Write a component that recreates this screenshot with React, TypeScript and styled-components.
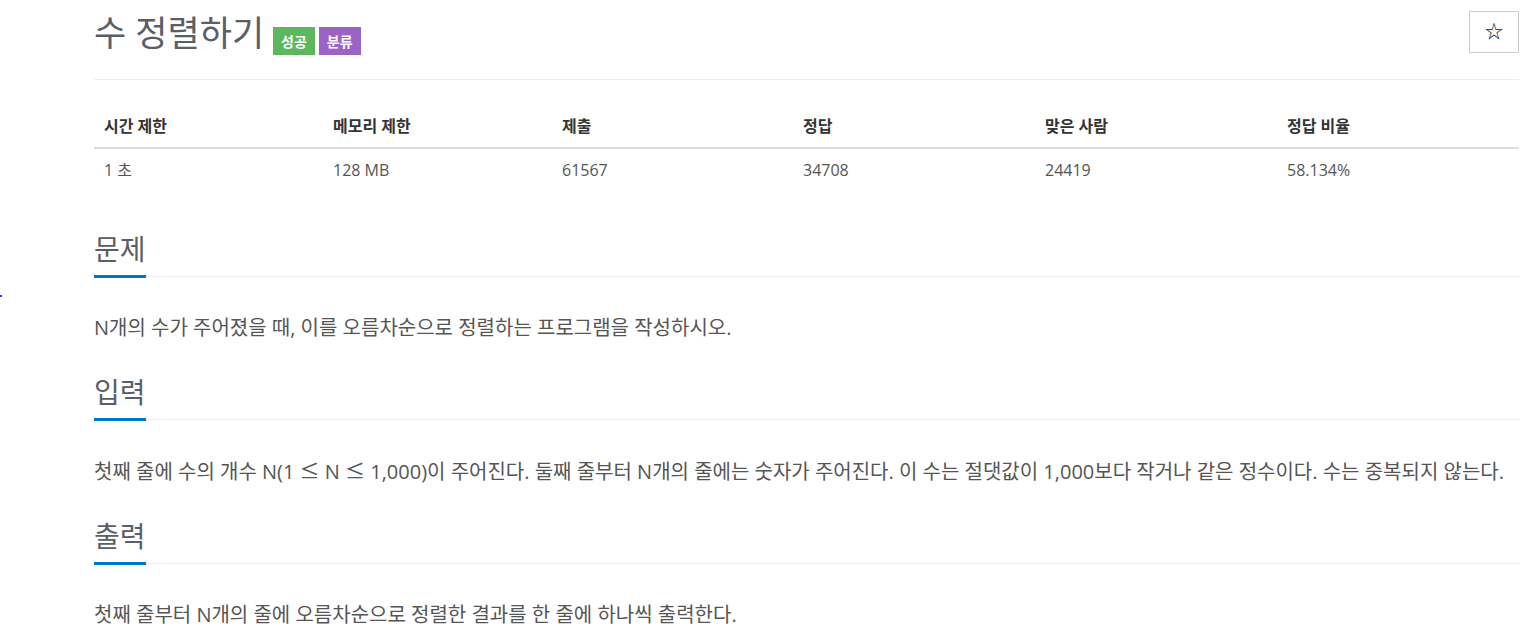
import React from 'react';
import styled, { createGlobalStyle } from 'styled-components';

const GlobalStyle = createGlobalStyle`
    html, body {
        margin: 0;
        padding: 0;
        background: #fff;
    }
    body {
        font-family: 'Open Sans', 'Noto Sans CJK KR', sans-serif;
        color: #555;
    }
`;

const Page = styled.div`
    position: relative;
    width: 1520px;
    box-sizing: border-box;
    padding: 0 1px 0 94px;
`;

/* stray blue pixel at the left edge of the original page */
const Dot = styled.span`
    position: absolute;
    left: 0;
    top: 295px;
    width: 2px;
    height: 2px;
    background: #2b2bff;
`;

const Header = styled.div`
    display: flex;
    justify-content: space-between;
    align-items: flex-start;
    padding: 11px 0 24px;
    border-bottom: 1px solid #eee;
`;

const TitleWrap = styled.div`
    display: flex;
    align-items: center;
`;

const Title = styled.h1`
    margin: 0 9px 0 0;
    font-size: 35px;
    font-weight: 400;
    line-height: 42px;
    color: #5a5e66;
`;

const Badge = styled.span<{ color: string }>`
    display: inline-flex;
    align-items: center;
    justify-content: center;
    height: 28px;
    margin-top: 16px;
    margin-right: 4px;
    padding: 0 8px;
    background: ${props => props.color};
    color: #fff;
    font-size: 14px;
    font-weight: 700;
`;

const StarButton = styled.button`
    width: 50px;
    height: 42px;
    border: 1px solid #ccc;
    background: #fff;
    color: #111;
    font-size: 18px;
    line-height: 1;
    font-family: 'Noto Sans CJK KR', 'DejaVu Sans', sans-serif;
    padding: 0 0 4px;
    cursor: pointer;
`;

const Stats = styled.div`
    display: grid;
    grid-template-columns: 229px 229px 241px 242px 242px 1fr;
    margin-top: 24px;
    font-size: 16px;
`;

const Th = styled.div`
    padding: 11px 10px 10px;
    line-height: 22px;
    font-weight: 700;
    color: #333;
    border-bottom: 2px solid #ddd;
`;

const Td = styled.div`
    padding: 10px 10px 8px;
    line-height: 22px;
    color: #555;
`;

const Section = styled.section<{ first?: boolean }>`
    margin-top: ${props => (props.first ? '44px' : '33px')};
`;

const Headline = styled.div`
    display: flex;
    border-bottom: 1px dotted #ddd;
`;

const Heading = styled.h2`
    margin: 0 0 -2px;
    padding-bottom: 10px;
    font-size: 28px;
    font-weight: 400;
    line-height: 32px;
    color: #5a5e66;
    border-bottom: 3px solid #0076c0;
`;

const Text = styled.p`
    margin: 36px 0 0;
    font-size: 20px;
    line-height: 30px;
    color: #555;
`;

/* math symbols render wider in the original */
const Sym = styled.span`
    font-family: 'Noto Sans CJK KR', sans-serif;
`;

const stats = [
    ['시간 제한', '1 초'],
    ['메모리 제한', '128 MB'],
    ['제출', '61567'],
    ['정답', '34708'],
    ['맞은 사람', '24419'],
    ['정답 비율', '58.134%'],
];

const sections: { title: string; body: React.ReactNode }[] = [
    {
        title: '문제',
        body: 'N개의 수가 주어졌을 때, 이를 오름차순으로 정렬하는 프로그램을 작성하시오.',
    },
    {
        title: '입력',
        body: (
            <>
                첫째 줄에 수의 개수 N(1 <Sym>≤</Sym> N <Sym>≤</Sym> 1,000)이 주어진다. 둘째 줄부터
                N개의 줄에는 숫자가 주어진다. 이 수는 절댓값이 1,000보다 작거나 같은 정수이다. 수는
                중복되지 않는다.
            </>
        ),
    },
    {
        title: '출력',
        body: '첫째 줄부터 N개의 줄에 오름차순으로 정렬한 결과를 한 줄에 하나씩 출력한다.',
    },
];

const App = () => (
    <Page>
        <GlobalStyle />
        <Dot />
        <Header>
            <TitleWrap>
                <Title>수 정렬하기</Title>
                <Badge color="#5cb85c">성공</Badge>
                <Badge color="#9b63c6">분류</Badge>
            </TitleWrap>
            <StarButton>☆</StarButton>
        </Header>
        <Stats>
            {stats.map(([label]) => (
                <Th key={label}>{label}</Th>
            ))}
            {stats.map(([label, value]) => (
                <Td key={label}>{value}</Td>
            ))}
        </Stats>
        {sections.map((s, i) => (
            <Section key={s.title} first={i === 0}>
                <Headline>
                    <Heading>{s.title}</Heading>
                </Headline>
                <Text>{s.body}</Text>
            </Section>
        ))}
    </Page>
);

export default App;
